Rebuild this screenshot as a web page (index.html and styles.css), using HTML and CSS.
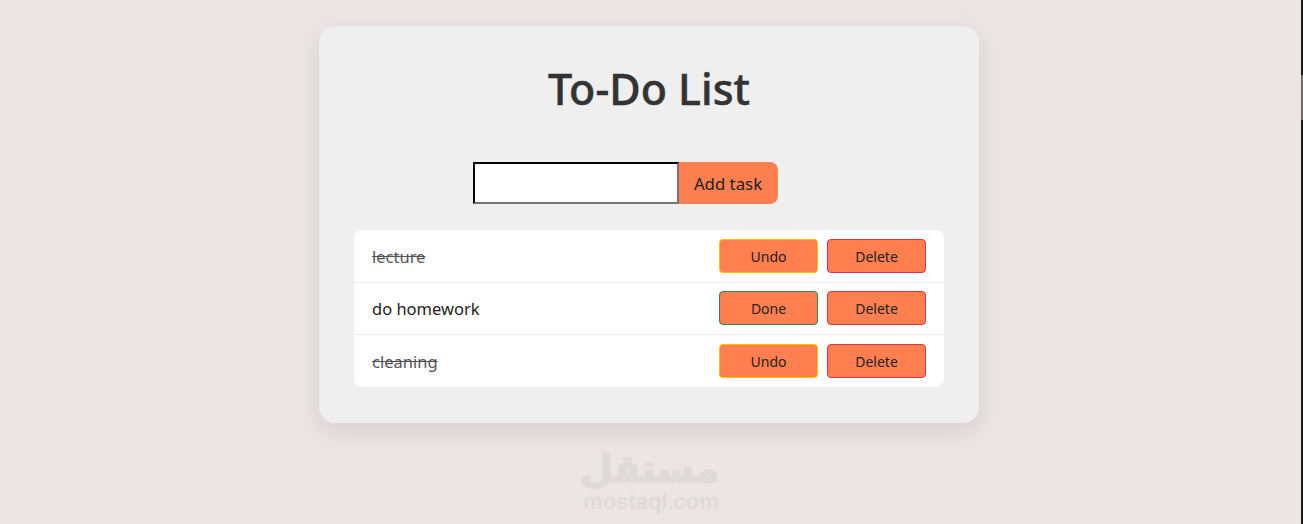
FILE: index.html
```html
<!DOCTYPE html>
<html lang="en">

<head>
    <meta charset="UTF-8" />
    <meta name="viewport" content="width=device-width, initial-scale=1.0" />
    <link rel="stylesheet" href="styles.css">
    <title>To-Do List</title>
</head>

<body>
    <div class="container">
        <h1 class="title">To-Do List</h1>
        <form class="task-form">
            <input type="text" class="task-input">
            <button type="button" class="add-btn">Add task</button>
        </form>
        <ul class="task-list">
            <li class="task-row">
                <span class="task-name done">lecture</span>
                <button type="button" class="btn btn-undo">Undo</button>
                <button type="button" class="btn btn-delete">Delete</button>
            </li>
            <li class="task-row">
                <span class="task-name">do homework</span>
                <button type="button" class="btn btn-done">Done</button>
                <button type="button" class="btn btn-delete">Delete</button>
            </li>
            <li class="task-row">
                <span class="task-name done">cleaning</span>
                <button type="button" class="btn btn-undo">Undo</button>
                <button type="button" class="btn btn-delete">Delete</button>
            </li>
        </ul>
    </div>
    <div class="watermark">
        <div class="watermark-ar" lang="ar" dir="rtl">مستقل</div>
        <div class="watermark-en">mostaql.com</div>
    </div>
    <div class="edge-strip"></div>
</body>

</html>
```

FILE: styles.css
```css
* {
    margin: 0;
    padding: 0;
    box-sizing: border-box;
}

body {
    background-color: #ece5e5;
    font-family: "Noto Sans", sans-serif;
    height: 524px;
    overflow: hidden;
    padding-top: 26px;
}

.container {
    width: 660px;
    height: 397px;
    margin-left: 319px;
    padding: 35px;
    background-color: #efefef;
    border-radius: 16px;
    box-shadow: 0 8px 24px rgba(0, 0, 0, 0.1);
}

.title {
    font-size: 43px;
    line-height: 55px;
    font-weight: 500;
    -webkit-text-stroke: 0.5px #333;
    color: #333;
    text-align: center;
}

.task-form {
    display: flex;
    justify-content: center;
    margin-top: 46px;
    padding-right: 48px;
}

.task-input {
    width: 206px;
    height: 42px;
    border: 2px inset #767676;
    border-top-color: #1a1a1a;
    border-left-color: #1a1a1a;
    background-color: #fff;
}

.add-btn {
    width: 99px;
    height: 42px;
    border: none;
    border-radius: 0 8px 8px 0;
    background-color: #ff7f50;
    color: #222;
    font-family: "Noto Sans", sans-serif;
    font-size: 16.8px;
}

.task-list {
    list-style: none;
    margin-top: 26px;
    background-color: #fff;
    border-radius: 8px;
}

.task-row {
    display: flex;
    align-items: center;
    gap: 9px;
    height: 52px;
    padding: 0 18px;
    border-bottom: 1px solid #eee;
}

.task-row:first-child {
    height: 53px;
}

.task-row:nth-child(2) {
    padding-bottom: 1px;
}

.task-row:last-child {
    border-bottom: none;
}

.task-name {
    flex: 1;
    font-size: 16.5px;
    color: #222;
}

.task-name.done {
    color: #555;
    text-decoration: line-through;
}

.btn {
    width: 99px;
    height: 34px;
    padding-top: 1px;
    border: 1px solid;
    border-radius: 4px;
    background-color: #ff7f50;
    color: #222;
    font-family: "Noto Sans", sans-serif;
    font-size: 14px;
}

.btn-undo {
    border-color: #ffc107;
}

.btn-done {
    border-color: #2e8b57;
}

.btn-delete {
    border-color: #dc3545;
}

.watermark {
    width: 136px;
    margin: 24px 0 0 583px;
    text-align: center;
    color: #dfdada;
}

.watermark-ar {
    font-family: "DejaVu Sans", sans-serif;
    font-weight: 700;
    font-size: 38px;
    line-height: 44px;
    -webkit-text-stroke: 1.5px #dfdada;
}

.watermark-en {
    font-family: "Liberation Sans", sans-serif;
    font-weight: 700;
    font-size: 22px;
    line-height: 22px;
}

.edge-strip {
    position: absolute;
    top: 0;
    right: 0;
    width: 2px;
    height: 524px;
    background: linear-gradient(#1a1a1a 75px, #6e6a6a 75px, #6e6a6a 120px, #1a1a1a 120px);
}
```
